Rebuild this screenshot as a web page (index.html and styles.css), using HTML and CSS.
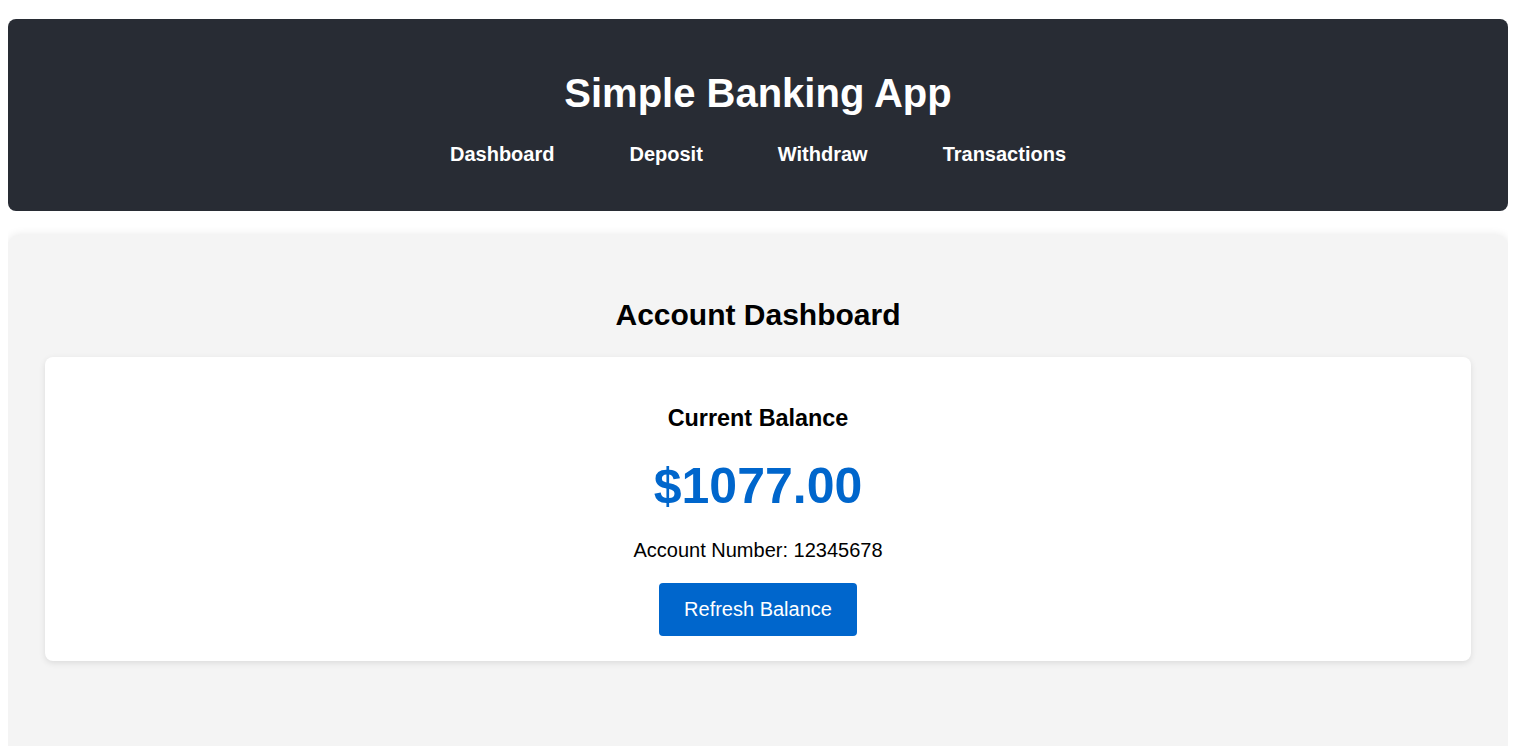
FILE: index.html
```html
<!DOCTYPE html>
<html lang="en">
<head>
<meta charset="utf-8">
<title>Simple Banking App</title>
<link rel="stylesheet" href="styles.css">
</head>
<body>
  <header class="app-header">
    <h1 class="app-title">Simple Banking App</h1>
    <nav class="app-nav">
      <a class="nav-link" href="#">Dashboard</a>
      <a class="nav-link" href="#">Deposit</a>
      <a class="nav-link" href="#">Withdraw</a>
      <a class="nav-link" href="#">Transactions</a>
    </nav>
  </header>
  <main class="app-main">
    <h2 class="section-title">Account Dashboard</h2>
    <div class="balance-card">
      <h3 class="balance-label">Current Balance</h3>
      <div class="balance-amount">$1077.00</div>
      <p class="account-number">Account Number: 12345678</p>
      <button class="refresh-btn" type="button">Refresh Balance</button>
    </div>
  </main>
</body>
</html>
```
FILE: styles.css
```css
html, body {
  font-family: "Liberation Sans", Arial, sans-serif;
  font-size: 20px;
  color: #000;
}
body {
  margin: 8px 5px 0 8px;
  background: #fff;
}
.app-header {
  margin-top: 11px;
  background: #282c34;
  border-radius: 8px;
  padding: 51px 20px 45px;
  text-align: center;
  color: #fff;
}
.app-title {
  margin: 0 0 27px;
  font-size: 40px;
  line-height: 46px;
  font-weight: bold;
}
.app-nav {
  display: flex;
  justify-content: center;
  gap: 75px;
  line-height: 23px;
}
.nav-link {
  color: #fff;
  text-decoration: none;
  font-weight: bold;
  font-size: 20px;
}
.app-main {
  margin-top: 24px;
  background: #f4f4f4;
  border-radius: 12px 12px 0 0;
  box-shadow: 0 0 10px rgba(0, 0, 0, 0.1);
  padding: 63px 37px 85px;
  text-align: center;
}
.section-title {
  margin: 0 0 25px;
  font-size: 30px;
  line-height: 34px;
  font-weight: bold;
}
.balance-card {
  background: #fff;
  border-radius: 8px;
  box-shadow: 0 2px 6px rgba(0, 0, 0, 0.1);
  padding: 24px 24px 25px;
}
.balance-label {
  margin: 24px 0 26px;
  font-size: 23.4px;
  line-height: 27px;
  font-weight: bold;
}
.balance-amount {
  margin: 0 0 24px;
  font-size: 50px;
  line-height: 57px;
  font-weight: bold;
  color: #0066cc;
}
.account-number {
  margin: 0 0 21px;
  font-size: 20px;
  line-height: 23px;
}
.refresh-btn {
  font-family: "Liberation Sans", Arial, sans-serif;
  font-size: 20px;
  line-height: 23px;
  padding: 15px 25px;
  background: #0066cc;
  color: #fff;
  border: none;
  border-radius: 4px;
  cursor: pointer;
}
```
